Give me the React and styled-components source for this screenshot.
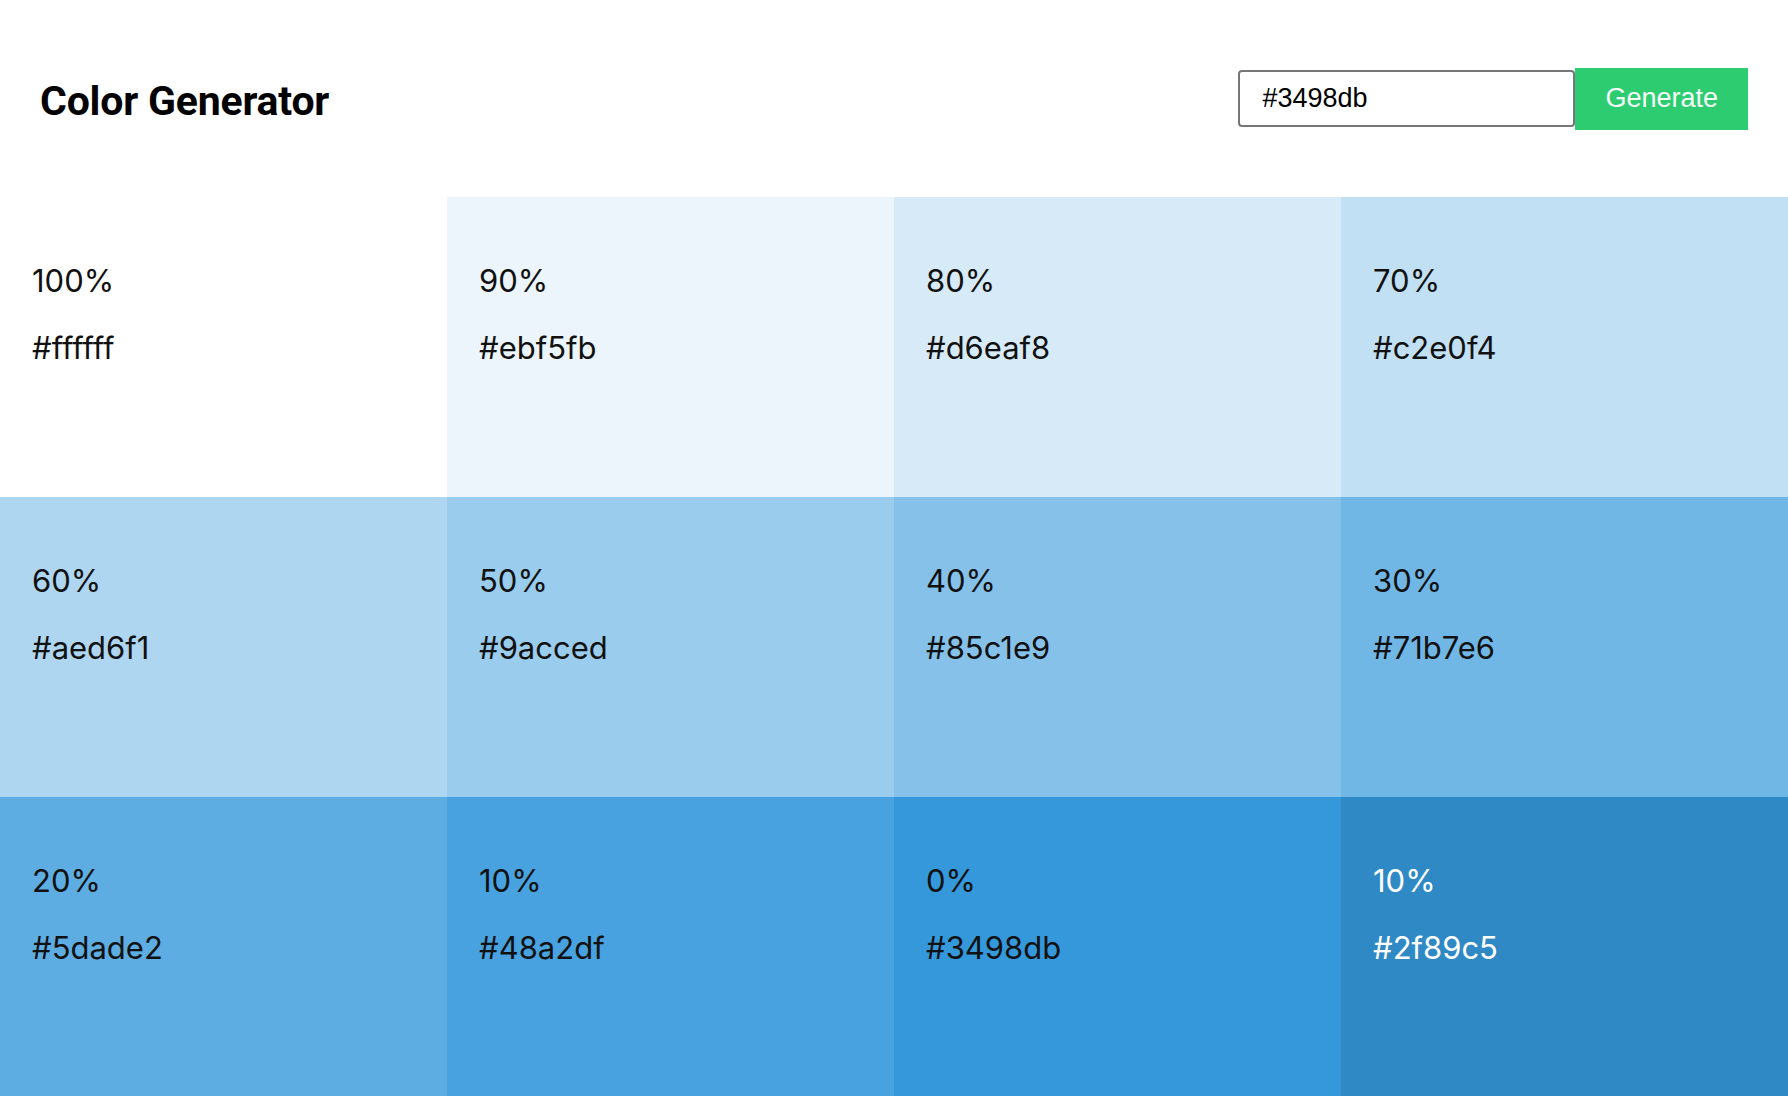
import React, { useState } from 'react';
import styled, { createGlobalStyle } from 'styled-components';

const GlobalStyle = createGlobalStyle`
    *, *::before, *::after{
        box-sizing: border-box;
    }
    html{
        scrollbar-width: none;
    }
    html::-webkit-scrollbar{
        display: none;
    }
    body{
        margin: 0;
        background: #fff;
        color: #111;
        font-family: "Inter", "Noto Sans", sans-serif;
    }
`;

// mix a hex colour with white (tint) or black (shade)
function hexToRgb(hex){
    const h = hex.replace('#', '');
    return [0, 2, 4].map(i => parseInt(h.slice(i, i + 2), 16));
}

function rgbToHex(rgb){
    return '#' + rgb.map(v => Math.round(v).toString(16).padStart(2, '0')).join('');
}

function makeList(hex){
    const base = hexToRgb(hex);
    const tints = [];
    for(let w = 100; w > 0; w -= 10){
        const rgb = base.map(c => c + (255 - c) * (w / 100));
        tints.push({ weight: w, hex: rgbToHex(rgb), type: 'tint' });
    }
    const shades = [];
    for(let w = 10; w <= 100; w += 10){
        const rgb = base.map(c => c * (1 - w / 100));
        shades.push({ weight: w, hex: rgbToHex(rgb), type: 'shade' });
    }
    return [...tints, { weight: 0, hex: rgbToHex(base), type: 'base' }, ...shades];
}

function App(){
    const [color, setColor] = useState('#3498db');
    const [list, setList] = useState(makeList('#3498db'));

    const handleSubmit = (e) => {
        e.preventDefault();
        try{
            setList(makeList(color));
        }catch(err){
            console.log(err);
        }
    };

    return(
        <>
            <GlobalStyle />
            <Header>
                <Title>Color Generator</Title>
                <Form onSubmit={handleSubmit}>
                    <Input
                        type="text"
                        value={color}
                        onChange={(e) => setColor(e.target.value)}
                    />
                    <Button type="submit">Generate</Button>
                </Form>
            </Header>
            <Colors>
                {list.map((c, index) => (
                    <Swatch key={index} $bg={c.hex} $light={c.type === 'shade'}>
                        <Percent>{c.weight}%</Percent>
                        <HexValue>{c.hex}</HexValue>
                    </Swatch>
                ))}
            </Colors>
        </>
    )
}

const Header = styled.section`
    height: 197px;
    padding: 0 40px;
    display: flex;
    align-items: center;
    justify-content: space-between;
`;

const Title = styled.h1`
    margin: 4px 0 0;
    font-family: "Roboto", "Liberation Sans", sans-serif;
    font-weight: 700;
    font-size: 41px;
    color: #000;
    letter-spacing: -0.2px;
`;

const Form = styled.form`
    display: flex;
    align-items: center;
`;

const Input = styled.input`
    width: 337px;
    height: 57px;
    padding: 0 22px;
    font-family: "Liberation Sans", Arial, sans-serif;
    font-size: 27px;
    color: #000;
    border: 2px solid #767676;
    border-radius: 4px;
    outline: none;
`;

const Button = styled.button`
    height: 62px;
    padding: 0 30px;
    background: #2ecc71;
    color: #f4fff8;
    border: none;
    font-family: "Liberation Sans", Arial, sans-serif;
    font-size: 27px;
    cursor: pointer;
`;

const Colors = styled.section`
    display: grid;
    grid-template-columns: repeat(4, 1fr);
    grid-auto-rows: 300px;
`;

const Swatch = styled.article`
    background: ${props => props.$bg};
    color: ${props => props.$light ? '#fff' : '#111'};
    padding: 66px 32px;
`;

const Percent = styled.p`
    margin: 0;
    font-size: 31px;
    line-height: 36px;
`;

const HexValue = styled.p`
    margin: 31px 0 0;
    font-size: 31px;
    line-height: 36px;
`;

export default App;
